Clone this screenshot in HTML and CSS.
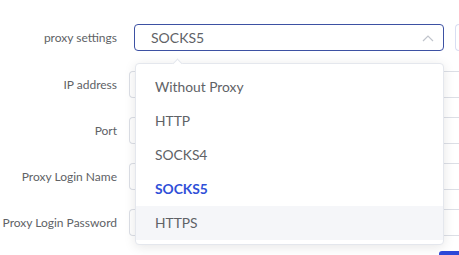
FILE: index.html
```html
<!DOCTYPE html>
<html lang="en">
<head>
    <meta charset="UTF-8">
    <meta name="viewport" content="width=device-width, initial-scale=1.0">
    <title>Proxy Settings</title>
    <link rel="stylesheet" href="styles.css">
</head>
<body>
    <div class="form">
        <div class="row first">
            <label class="label">proxy settings</label>
            <div class="select">
                <span class="select-value">SOCKS5</span>
                <svg class="chevron" width="12" height="8" viewBox="0 0 12 8">
                    <polyline points="1,7 6,2 11,7" fill="none" stroke="#c0c4cc" stroke-width="1.2"/>
                </svg>
            </div>
            <div class="side-btn"></div>
        </div>
        <div class="row">
            <label class="label">IP address</label>
            <div class="input"></div>
        </div>
        <div class="row">
            <label class="label">Port</label>
            <div class="input"></div>
        </div>
        <div class="row">
            <label class="label">Proxy Login Name</label>
            <div class="input"></div>
        </div>
        <div class="row">
            <label class="label">Proxy Login Password</label>
            <div class="input"></div>
        </div>
    </div>

    <!-- open dropdown of the proxy select -->
    <div class="dropdown">
        <span class="arrow"></span>
        <ul class="options">
            <li>Without Proxy</li>
            <li>HTTP</li>
            <li>SOCKS4</li>
            <li class="selected">SOCKS5</li>
            <li class="hover">HTTPS</li>
        </ul>
    </div>

    <div class="save-btn"></div>
</body>
</html>
```

FILE: styles.css
```css
html {
    overflow: hidden;
}
body {
    margin: 0;
    background: #fff;
    font-family: 'Lato', 'Noto Sans', sans-serif;
    color: #606266;
    width: 459px;
    height: 255px;
    overflow: hidden;
    position: relative;
}
.form {
    padding-top: 24px;
}
.row {
    display: flex;
    align-items: center;
    height: 27px;
    margin-bottom: 19px;
}
.row.first {
    margin-bottom: 20px;
}
.label {
    width: 117px;
    flex-shrink: 0;
    display: flex;
    justify-content: flex-end;
    white-space: nowrap;
    font-size: 12px;
    color: #606266;
    margin-right: 12px;
}
.input {
    width: 330px;
    height: 27px;
    box-sizing: border-box;
    flex-shrink: 0;
    border: 1px solid #dcdfe6;
    border-right: none;
    border-radius: 4px 0 0 4px;
}
.select {
    margin-left: 5px;
    width: 310px;
    height: 27px;
    box-sizing: border-box;
    flex-shrink: 0;
    border: 1px solid #3d51a3;
    border-radius: 4px;
    display: flex;
    align-items: center;
    justify-content: space-between;
    padding: 0 9px 0 16px;
}
.select-value {
    font-size: 14px;
    color: #606266;
}
.chevron {
    display: block;
}
.side-btn {
    margin-left: 11px;
    width: 5px;
    height: 27px;
    box-sizing: border-box;
    flex-shrink: 0;
    border: 1px solid #d9def2;
    border-right: none;
    border-radius: 4px 0 0 4px;
}
.dropdown {
    position: absolute;
    left: 135px;
    top: 63px;
    width: 309px;
    height: 182px;
    box-sizing: border-box;
    background: #fff;
    border: 1px solid #e4e7ed;
    border-radius: 4px;
    box-shadow: 0 2px 12px rgba(0, 0, 0, 0.1);
}
.arrow {
    position: absolute;
    left: 38px;
    top: -4px;
    width: 6px;
    height: 6px;
    background: #fff;
    border-left: 1px solid #e4e7ed;
    border-top: 1px solid #e4e7ed;
    transform: rotate(45deg);
}
.options {
    list-style: none;
    margin: 0;
    padding: 6px 0;
}
.options li {
    height: 34px;
    line-height: 34px;
    padding-left: 19px;
    font-size: 13.8px;
    color: #606266;
}
.options li.selected {
    color: #2f4fd8;
    font-weight: bold;
}
.options li.hover {
    background: #f5f6f9;
}
.save-btn {
    position: absolute;
    left: 439px;
    top: 251px;
    width: 20px;
    height: 4px;
    background: #2c48d8;
    border-radius: 3px 0 0 0;
}
```
